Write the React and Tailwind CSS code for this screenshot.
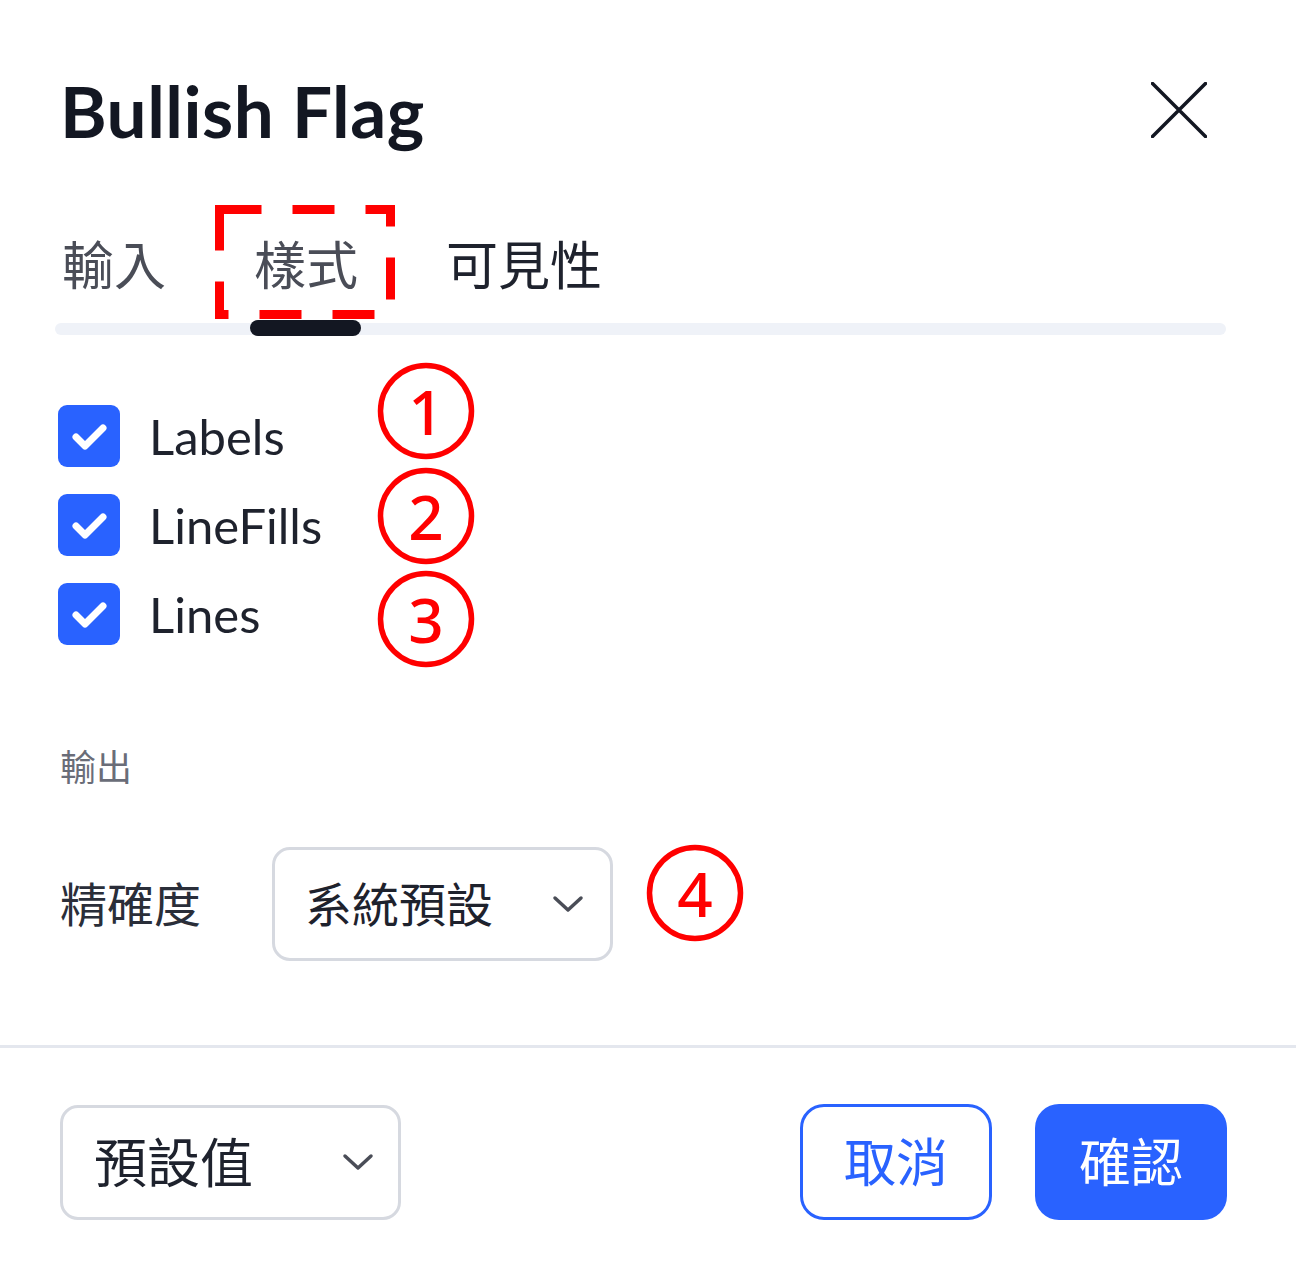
import React from "react";

function Check() {
  return (
    <div className="w-[62px] h-[62px] rounded-[9px] bg-[#2962ff] flex items-center justify-center shrink-0">
      <svg width="62" height="62" viewBox="0 0 62 62">
        <path d="M18 32 L27 41 L45 23" fill="none" stroke="#fff" strokeWidth="7" strokeLinecap="round" strokeLinejoin="round" />
      </svg>
    </div>
  );
}

function Chevron({ w = 32 }) {
  return (
    <svg width={w} height="20" viewBox="0 0 32 20">
      <path d="M3 4 L16 16 L29 4" fill="none" stroke="#4a4d57" strokeWidth="3.5" strokeLinecap="round" strokeLinejoin="round" />
    </svg>
  );
}

function Mark({ n, x, y }) {
  return (
    <div className="absolute w-[98px] h-[98px]" style={{ left: x - 49, top: y - 49 }}>
      <svg width="98" height="98" viewBox="0 0 98 98" className="absolute inset-0">
        <circle cx="49" cy="49" r="45.5" fill="none" stroke="#ff0000" strokeWidth="5.5" />
      </svg>
      <div className="absolute inset-0 flex items-center justify-center text-[#ff0000] text-[62px] leading-none font-['Noto_Sans',sans-serif] font-medium">
        {n}
      </div>
    </div>
  );
}

function Row({ label }) {
  return (
    <div className="flex items-center h-[62px]">
      <Check />
      <span className="ml-[29px] text-[49px] leading-none text-[#1e222d]">{label}</span>
    </div>
  );
}

export default function App() {
  return (
    <div className="relative w-[1296px] h-[1261px] bg-white overflow-hidden font-['Lato','Noto_Sans_CJK_TC',sans-serif]">
      {/* header */}
      <div className="mt-[50px] h-[120px] flex items-center justify-between pl-[60px] pr-[89px]">
        <h1 className="text-[71px] leading-none font-bold text-[#131722] tracking-[0.5px]">Bullish Flag</h1>
        <svg width="56" height="56" viewBox="0 0 56 56">
          <path d="M1.5 1.5 L54.5 54.5 M54.5 1.5 L1.5 54.5" stroke="#131722" strokeWidth="3.5" strokeLinecap="round" />
        </svg>
      </div>

      {/* tabs */}
      <div className="mt-[50px] pl-[55px] pr-[70px]">
        <div className="flex items-center h-[90px] pl-[7px] gap-[88px] text-[52px] leading-none">
          <span className="text-[#4a4d57]">輸入</span>
          <span className="text-[#4a4d57]">樣式</span>
          <span className="text-[#1e222d]">可見性</span>
        </div>
        <div className="relative mt-[13px] h-[12px] rounded-full bg-[#eff2f8]">
          <div className="absolute left-[195px] top-[-3px] w-[111px] h-[16px] rounded-full bg-[#131722]" />
        </div>
      </div>

      {/* checkboxes */}
      <div className="mt-[70px] pl-[58px] flex flex-col gap-[27px]">
        <Row label="Labels" />
        <Row label="LineFills" />
        <Row label="Lines" />
      </div>

      {/* output */}
      <div className="mt-[104px] pl-[60px] text-[36px] leading-none text-[#6a6d78]">輸出</div>

      <div className="mt-[62px] pl-[60px] flex items-center">
        <span className="w-[212px] text-[47px] leading-none text-[#2a2e39]">精確度</span>
        <div className="w-[341px] h-[114px] rounded-[18px] border-[3px] border-[#d6d9e0] flex items-center justify-between pl-[30px] pr-[26px]">
          <span className="text-[47px] leading-none text-[#1e222d]">系統預設</span>
          <Chevron />
        </div>
      </div>

      <div className="mt-[84px] h-[3px] bg-[#e4e7ee]" />

      {/* footer */}
      <div className="mt-[56px] pl-[60px] pr-[69px] flex items-center justify-between">
        <div className="w-[341px] h-[115px] rounded-[18px] border-[3px] border-[#d6d9e0] flex items-center justify-between pl-[31px] pr-[24px]">
          <span className="text-[53px] leading-none text-[#1e222d]">預設值</span>
          <Chevron w={32} />
        </div>
        <div className="flex items-center gap-[43px]">
          <button className="w-[192px] h-[116px] rounded-[24px] border-[3px] border-[#2962ff] bg-white text-[#2962ff] text-[52px] leading-none flex items-center justify-center">
            取消
          </button>
          <button className="w-[192px] h-[116px] rounded-[24px] bg-[#2962ff] text-white text-[52px] leading-none flex items-center justify-center">
            確認
          </button>
        </div>
      </div>

      {/* annotations */}
      <svg className="absolute left-[215px] top-[205px]" width="180" height="114" viewBox="0 0 180 114">
        <rect x="4.5" y="4.5" width="171" height="105" fill="none" stroke="#ff0000" strokeWidth="9" strokeDasharray="42 31" strokeLinejoin="miter" />
      </svg>
      <Mark n="1" x={426} y={411} />
      <Mark n="2" x={426} y={516} />
      <Mark n="3" x={426} y={619} />
      <Mark n="4" x={695} y={893} />
    </div>
  );
}
